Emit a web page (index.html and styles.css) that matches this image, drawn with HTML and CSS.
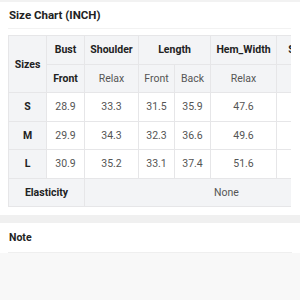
FILE: index.html
```html
<!DOCTYPE html>
<html>
<head>
<meta charset="utf-8">
<link rel="stylesheet" href="styles.css">
</head>
<body>
<div class="topline"></div>
<section class="card">
  <div class="title">Size Chart (INCH)</div>
  <div class="scroll">
    <table class="chart">
      <colgroup>
        <col class="c-sizes"><col class="c-bust"><col class="c-shoulder"><col class="c-front"><col class="c-back"><col class="c-hem"><col class="c-sleeve">
      </colgroup>
      <tr class="head">
        <th rowspan="2">Sizes</th>
        <th>Bust</th>
        <th>Shoulder</th>
        <th colspan="2">Length</th>
        <th>Hem_Width</th>
        <th>Sleeve_Length</th>
      </tr>
      <tr class="sub">
        <th>Front</th>
        <td>Relax</td>
        <td>Front</td>
        <td>Back</td>
        <td>Relax</td>
        <td>Relax</td>
      </tr>
      <tr>
        <th>S</th><td>28.9</td><td>33.3</td><td>31.5</td><td>35.9</td><td>47.6</td><td>23.2</td>
      </tr>
      <tr>
        <th>M</th><td>29.9</td><td>34.3</td><td>32.3</td><td>36.6</td><td>49.6</td><td>23.6</td>
      </tr>
      <tr>
        <th>L</th><td>30.9</td><td>35.2</td><td>33.1</td><td>37.4</td><td>51.6</td><td>24.0</td>
      </tr>
      <tr class="elastic">
        <th colspan="2">Elasticity</th>
        <td colspan="5">None</td>
      </tr>
    </table>
  </div>
</section>
<div class="gap"></div>
<section class="note">
  <div class="note-title">Note</div>
</section>
<div class="rest"></div>
</body>
</html>
```
FILE: styles.css
```css
html, body {
  margin: 0;
  padding: 0;
  background: #f8f8f8;
  font-family: Roboto, "Liberation Sans", Arial, sans-serif;
}
.topline {
  height: 2px;
  background: #f2f2f2;
}
.card {
  background: #fff;
  padding: 0 9px 8px 8px;
}
.title {
  height: 26px;
  line-height: 27px;
  font-size: 11.5px;
  font-weight: 700;
  color: #222;
  padding-left: 1px;
  border-bottom: 1px solid #f2f2f2;
}
.scroll {
  margin-top: 6px;
  overflow: hidden;
}
.chart {
  border-collapse: collapse;
  table-layout: fixed;
  width: 360px;
  font-size: 10.5px;
}
.c-sizes { width: 38px; }
.c-bust { width: 38px; }
.c-shoulder { width: 54px; }
.c-front { width: 36px; }
.c-back { width: 36px; }
.c-hem { width: 66px; }
.c-sleeve { width: 92px; }
.chart th, .chart td {
  border: 1px solid #e6e6e8;
  height: 27.5px;
  padding: 0;
  text-align: center;
  white-space: nowrap;
  overflow: hidden;
}
.chart th {
  background: #f3f4f6;
  color: #222;
  font-weight: 700;
  font-size: 10.5px;
}
.chart td {
  background: #fff;
  color: #555;
}
.chart .sub td {
  background: #f3f4f6;
}
.chart .elastic th, .chart .elastic td {
  background: #f3f4f6;
}
.gap {
  height: 8px;
  background: #f0f0f0;
}
.note {
  background: #fff;
  padding: 0 8px;
}
.note-title {
  height: 29px;
  line-height: 29px;
  font-size: 10.5px;
  font-weight: 700;
  color: #222;
  padding-left: 1px;
  border-bottom: 1px solid #efefef;
}
.rest {
  height: 60px;
}
```
